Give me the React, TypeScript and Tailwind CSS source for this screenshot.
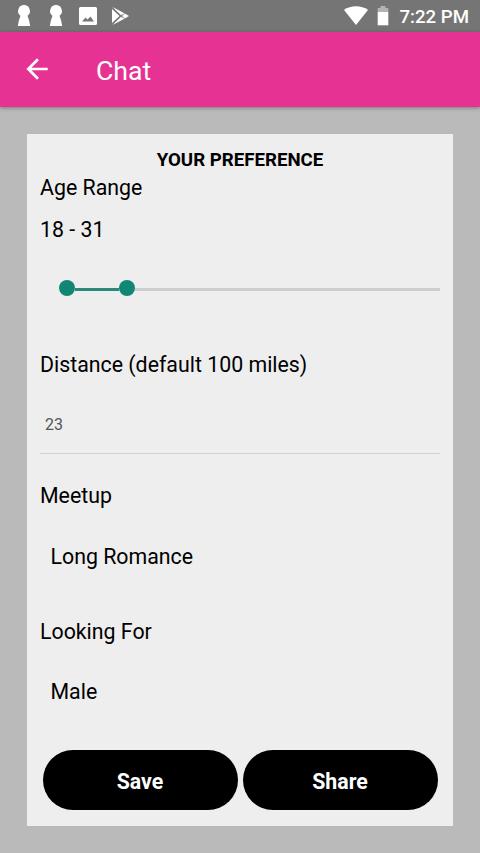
function KeyholeIcon() {
  return (
    <svg className="h-8 w-4" viewBox="0 0 16 32" fill="currentColor">
      <path d="M8 5a6 6 0 0 0-3.500 10.800L3 20l-1.200 6h12.400L13 20l-1.500-4.200A6 6 0 0 0 8 5z" />
    </svg>
  );
}

function StatusBar() {
  return (
    <div className="flex h-8 shrink-0 items-center justify-between bg-[#757575] pr-[11px] pl-4 text-white">
      <div className="flex items-center">
        <KeyholeIcon />
        <span className="w-4" />
        <KeyholeIcon />
        <svg className="ml-3 h-8 w-6" viewBox="0 0 24 32" fill="currentColor">
          <path fillRule="evenodd" d="M4.500 7h15A1.500 1.500 0 0 1 21 8.500v15a1.500 1.500 0 0 1-1.500 1.500h-15A1.500 1.500 0 0 1 3 23.500v-15A1.500 1.500 0 0 1 4.500 7zM6 21.500h12l-3.500-5-3 3-2-2z" />
        </svg>
        <svg className="ml-2 h-8 w-6" viewBox="0 0 24 32" fill="currentColor">
          <path d="M4 9l7.500 7L4 23zM4.500 7l12 6.300-3.500 2zM4.500 25l12-6.300-3.500-2zM16.800 13.500L21 16l-4.200 2.500L14 16z" />
        </svg>
      </div>
      <div className="flex items-center">
        <svg className="h-8 w-6" viewBox="0 0 24 32" fill="currentColor">
          <path d="M0 10C6.500 5 17.500 5 24 10L12 25z" />
        </svg>
        <svg className="ml-[9px] h-8 w-3" viewBox="0 0 12 32" fill="currentColor">
          <path opacity=".45" d="M.7 12V8h2.800V6h5v2h2.800v4z" />
          <path d="M.7 12h10.600v13.300H.7z" />
        </svg>
        <span className="ml-[10px] pt-[2px] text-[18.670px] leading-8 font-medium">7:22 PM</span>
      </div>
    </div>
  );
}

function Label({ children }: { children: string }) {
  return <p className="text-[21.330px] leading-7">{children}</p>;
}

function RangeSlider() {
  return (
    <div className="mt-9 ml-[18.500px] flex h-4 items-center">
      <span className="size-4 rounded-full bg-[#128675]" />
      <span className="mt-[2px] h-[3px] w-11 bg-[#2c8878]" />
      <span className="size-4 rounded-full bg-[#128675]" />
      <span className="mt-[2px] h-[3px] grow bg-[#cecece]" />
    </div>
  );
}

function PillButton({ children }: { children: string }) {
  return (
    <button className="h-[60px] flex-1 rounded-full bg-black pt-1 text-[21.330px] font-bold text-white">{children}</button>
  );
}

export default function App() {
  return (
    <div className="flex h-[853px] w-full flex-col overflow-hidden bg-[#bababa] font-['Roboto',sans-serif] text-black">
      <StatusBar />
      <header className="flex h-[75px] shrink-0 items-center bg-[#e63292] pl-[21px] text-white shadow-[0_1px_4px_rgba(0,0,0,0.35)]">
        <svg className="mb-[2px] size-8" viewBox="0 0 24 24" fill="currentColor">
          <path d="M20 11H7.830l5.590-5.590L12 4l-8 8 8 8 1.410-1.410L7.830 13H20z" />
        </svg>
        <h1 className="ml-[43px] pt-[2px] text-[26.670px]">Chat</h1>
      </header>
      <main className="mx-[27px] mt-[27px] flex h-[692px] flex-col bg-[#eee] px-[13px] pt-[13px]">
        <h2 className="mb-px text-center text-[18.670px] leading-[26px] font-bold">YOUR PREFERENCE</h2>
        <Label>Age Range</Label>
        <div className="mt-[14px]"><Label>18 - 31</Label></div>
        <RangeSlider />
        <section className="mt-[55px]">
          <Label>Distance (default 100 miles)</Label>
          <div className="mt-[14px] flex h-[61px] items-center border-b border-[#d2d2d2] pt-[3px] pl-[5px] text-base text-[#555]">23</div>
        </section>
        <section className="mt-7">
          <Label>Meetup</Label>
          <div className="mt-[33px] pl-[10.500px]"><Label>Long Romance</Label></div>
        </section>
        <section className="mt-[47px]">
          <Label>Looking For</Label>
          <div className="mt-8 pl-[10.500px]"><Label>Male</Label></div>
        </section>
        <div className="mx-[2.500px] mt-auto mb-4 flex gap-[5px]">
          <PillButton>Save</PillButton>
          <PillButton>Share</PillButton>
        </div>
      </main>
    </div>
  );
}
